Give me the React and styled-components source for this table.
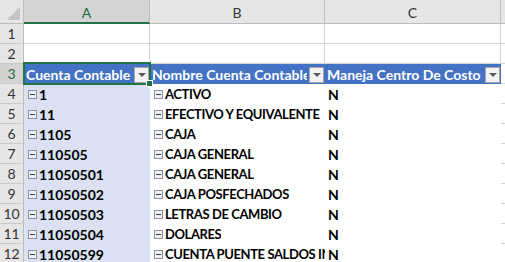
import React from 'react'
import styled, { createGlobalStyle } from 'styled-components'

const GlobalStyle = createGlobalStyle`
  html, body {
    margin: 0;
    padding: 0;
    background: #ffffff;
  }
  body {
    font-family: Lato, "Open Sans", "Liberation Sans", sans-serif;
    overflow: hidden;
  }
`

const COLS = '24px 126px 175px 176px 1fr'

const rows = [
  { code: '1', name: 'ACTIVO', cc: 'N' },
  { code: '11', name: 'EFECTIVO Y EQUIVALENTE', cc: 'N' },
  { code: '1105', name: 'CAJA', cc: 'N' },
  { code: '110505', name: 'CAJA GENERAL', cc: 'N' },
  { code: '11050501', name: 'CAJA GENERAL', cc: 'N' },
  { code: '11050502', name: 'CAJA POSFECHADOS', cc: 'N' },
  { code: '11050503', name: 'LETRAS DE CAMBIO', cc: 'N' },
  { code: '11050504', name: 'DOLARES', cc: 'N' },
  { code: '11050599', name: 'CUENTA PUENTE SALDOS INICIALES', cc: 'N' },
]

const Sheet = styled.div`
  position: relative;
  width: 505px;
  height: 262px;
  overflow: hidden;
  background: #fff;
`

const Row = styled.div`
  display: grid;
  grid-template-columns: ${COLS};
  height: ${p => p.$h || 20}px;
`

const Corner = styled.div`
  position: relative;
  background: #e6e6e6;
  border-right: 1px solid #bdbdbd;
  border-bottom: 1px solid #bdbdbd;
  &::after {
    content: '';
    position: absolute;
    right: 3px;
    bottom: 3px;
    border-left: 13px solid transparent;
    border-bottom: 13px solid #c4c4c4;
  }
`

const ColHead = styled.div`
  display: flex;
  align-items: center;
  justify-content: center;
  padding-top: 2px;
  font-size: 14px;
  color: ${p => (p.$active ? '#1d6b40' : '#333')};
  background: ${p => (p.$active ? '#d3d3d3' : '#e6e6e6')};
  border-right: 1px solid #bdbdbd;
  border-bottom: ${p => (p.$active ? '2px solid #217346' : '1px solid #bdbdbd')};
  box-sizing: border-box;
`

const RowHead = styled.div`
  display: flex;
  align-items: center;
  justify-content: center;
  font-size: 14px;
  color: ${p => (p.$active ? '#1d6b40' : '#333')};
  background: ${p => (p.$active ? '#d3d3d3' : '#e6e6e6')};
  border-right: 1px solid #bdbdbd;
  border-bottom: 1px solid #c9c9c9;
  box-sizing: border-box;
`

const Cell = styled.div`
  border-right: 1px solid #d4d4d4;
  border-bottom: 1px solid #d4d4d4;
  box-sizing: border-box;
`

const Filler = styled.div`
  background: ${p => (p.$head ? '#e6e6e6' : '#fff')};
  border-bottom: 1px solid ${p => (p.$head ? '#bdbdbd' : '#d4d4d4')};
  box-sizing: border-box;
`

const HeadCell = styled.div`
  display: flex;
  align-items: center;
  gap: 2px;
  padding: 0 1px 0 2px;
  background: #4472c4;
  color: #fff;
  font-weight: 700;
  font-size: 14px;
  overflow: hidden;
  white-space: nowrap;
  box-sizing: border-box;
  span {
    flex: 1;
    overflow: hidden;
  }
`

const FilterBtn = styled.div`
  flex: none;
  width: 15px;
  height: 16px;
  margin-top: 1px;
  display: flex;
  align-items: center;
  justify-content: center;
  background: #f3f3f3;
  border: 1px solid #a6a6a6;
  box-sizing: border-box;
  &::after {
    content: '';
    border-left: 4px solid transparent;
    border-right: 4px solid transparent;
    border-top: 4px solid #5a5a5a;
  }
`

const DataCell = styled.div`
  display: flex;
  align-items: center;
  gap: 2px;
  padding: 0 0 0 ${p => p.$pad}px;
  background: ${p => (p.$tint ? '#d9e1f2' : '#fff')};
  color: #000;
  font-weight: 700;
  font-size: ${p => (p.$caps ? 13 : 14)}px;
  letter-spacing: ${p => (p.$caps ? '-0.4px' : '0')};
  white-space: nowrap;
  overflow: hidden;
  box-sizing: border-box;
  span + span {
    overflow: hidden;
  }
`

const Toggle = styled.span`
  flex: none;
  position: relative;
  width: 9px;
  height: 9px;
  background: #eef0f4;
  border: 1px solid #8c93a3;
  box-sizing: border-box;
  &::after {
    content: '';
    position: absolute;
    left: 1px;
    right: 1px;
    top: 3px;
    height: 1px;
    background: #3c3c3c;
  }
`

const Selection = styled.div`
  position: absolute;
  left: 23px;
  top: 62px;
  width: 128px;
  height: 23px;
  border: 2px solid #217346;
  box-sizing: border-box;
  pointer-events: none;
  &::after {
    content: '';
    position: absolute;
    right: -4px;
    bottom: -4px;
    width: 5px;
    height: 5px;
    background: #217346;
    border: 1px solid #fff;
  }
`

function Header({ label }) {
  return (
    <HeadCell>
      <span>{label}</span>
      <FilterBtn />
    </HeadCell>
  )
}

export default function App() {
  return (
    <>
      <GlobalStyle />
      <Sheet>
        <Row $h={24}>
          <Corner />
          <ColHead $active>A</ColHead>
          <ColHead>B</ColHead>
          <ColHead>C</ColHead>
          <Filler $head />
        </Row>
        {[1, 2].map(n => (
          <Row key={n}>
            <RowHead>{n}</RowHead>
            <Cell />
            <Cell />
            <Cell />
            <Filler />
          </Row>
        ))}
        <Row>
          <RowHead $active>3</RowHead>
          <Header label="Cuenta Contable" />
          <Header label="Nombre Cuenta Contable" />
          <Header label="Maneja Centro De Costo" />
          <Filler />
        </Row>
        {rows.map((r, i) => (
          <Row key={r.code}>
            <RowHead>{i + 4}</RowHead>
            <DataCell $tint $pad={4}>
              <Toggle />
              <span>{r.code}</span>
            </DataCell>
            <DataCell $caps $pad={4}>
              <Toggle />
              <span>{r.name}</span>
            </DataCell>
            <DataCell $pad={3}>{r.cc}</DataCell>
            <Filler />
          </Row>
        ))}
        <Selection />
      </Sheet>
    </>
  )
}
